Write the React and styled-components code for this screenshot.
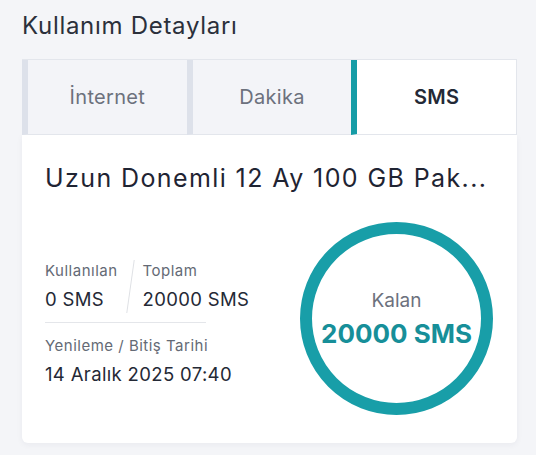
import React from "react";
import styled, { createGlobalStyle } from "styled-components";

const GlobalStyle = createGlobalStyle`
  html, body {
    margin: 0;
    padding: 0;
    background: #f4f5f8;
  }
  body {
    font-family: Inter, "Noto Sans", sans-serif;
    color: #252a36;
  }
`;

const Page = styled.div`
  width: 536px;
  height: 455px;
  box-sizing: border-box;
  padding: 10px 19px 0 22px;
`;

const Heading = styled.h2`
  margin: 0;
  font-size: 24px;
  font-weight: 400;
  line-height: 32px;
  letter-spacing: 0.7px;
  color: #2b303b;
`;

const Tabs = styled.div`
  display: flex;
  margin-top: 17px;
  height: 76px;
  border-top: 1px solid #e3e6ec;
  border-right: 1px solid #e3e6ec;
  box-sizing: border-box;
`;

const Tab = styled.div`
  flex: 1;
  display: flex;
  align-items: center;
  justify-content: center;
  border-left: 6px solid ${(p) => (p.active ? "#169ca6" : "#dde1ea")};
  background: ${(p) => (p.active ? "#ffffff" : "#f3f4f8")};
  border-bottom: 1px solid #e3e6ec;
  font-size: 20px;
  font-weight: ${(p) => (p.active ? 600 : 400)};
  letter-spacing: 0.3px;
  color: ${(p) => (p.active ? "#242936" : "#6c717d")};
`;

const Card = styled.div`
  height: 308px;
  box-sizing: border-box;
  background: #ffffff;
  border-radius: 0 0 6px 6px;
  box-shadow: 0 2px 6px rgba(30, 40, 70, 0.05);
  padding: 27px 24px 0 23px;
`;

const PackageName = styled.div`
  font-size: 25px;
  line-height: 32px;
  letter-spacing: 1.4px;
  color: #1f2433;
  white-space: nowrap;
  overflow: hidden;
`;

const Body = styled.div`
  display: flex;
  justify-content: space-between;
  align-items: flex-start;
  margin-top: 26px;
`;

const Info = styled.div`
  display: flex;
  flex-direction: column;
  padding-top: 40px;
`;

const Pair = styled.div`
  display: flex;
  align-items: stretch;
  white-space: nowrap;
`;

const Divider = styled.div`
  width: 161px;
  height: 1px;
  margin-top: 9px;
  background: #e4e6ea;
`;

const Stat = styled.div`
  display: flex;
  flex-direction: column;
`;

const Slash = styled.div`
  width: 1px;
  margin: 0 12px 0 12px;
  background: #dfe1e5;
  transform: skewX(-8deg);
`;

const Label = styled.div`
  font-size: 15px;
  line-height: 22px;
  letter-spacing: 0.5px;
  color: #646a75;
`;

const Value = styled.div`
  margin-top: 3px;
  font-size: 18.5px;
  line-height: 28px;
  letter-spacing: 0.35px;
  color: #242936;
`;

const Renewal = styled.div`
  margin-top: 12px;
  display: flex;
  flex-direction: column;
`;

const Ring = styled.div`
  width: 193px;
  height: 193px;
  margin-top: 2px;
  box-sizing: border-box;
  border-radius: 50%;
  border: 12px solid #189ea8;
  display: flex;
  flex-direction: column;
  align-items: center;
  justify-content: center;
  gap: 6px;
`;

const RingLabel = styled.div`
  font-size: 19px;
  color: #6c717d;
  line-height: 24px;
`;

const RingValue = styled.div`
  font-size: 26px;
  font-weight: 700;
  color: #178f99;
  line-height: 30px;
`;

export default function App() {
  return (
    <>
      <GlobalStyle />
      <Page>
        <Heading>Kullanım Detayları</Heading>
        <Tabs>
          <Tab>İnternet</Tab>
          <Tab>Dakika</Tab>
          <Tab active>SMS</Tab>
        </Tabs>
        <Card>
          <PackageName>Uzun Donemli 12 Ay 100 GB Pak...</PackageName>
          <Body>
            <Info>
              <Pair>
                <Stat>
                  <Label>Kullanılan</Label>
                  <Value>0 SMS</Value>
                </Stat>
                <Slash />
                <Stat>
                  <Label>Toplam</Label>
                  <Value>20000 SMS</Value>
                </Stat>
              </Pair>
              <Divider />
              <Renewal>
                <Label>Yenileme / Bitiş Tarihi</Label>
                <Value>14 Aralık 2025 07:40</Value>
              </Renewal>
            </Info>
            <Ring>
              <RingLabel>Kalan</RingLabel>
              <RingValue>20000 SMS</RingValue>
            </Ring>
          </Body>
        </Card>
      </Page>
    </>
  );
}
